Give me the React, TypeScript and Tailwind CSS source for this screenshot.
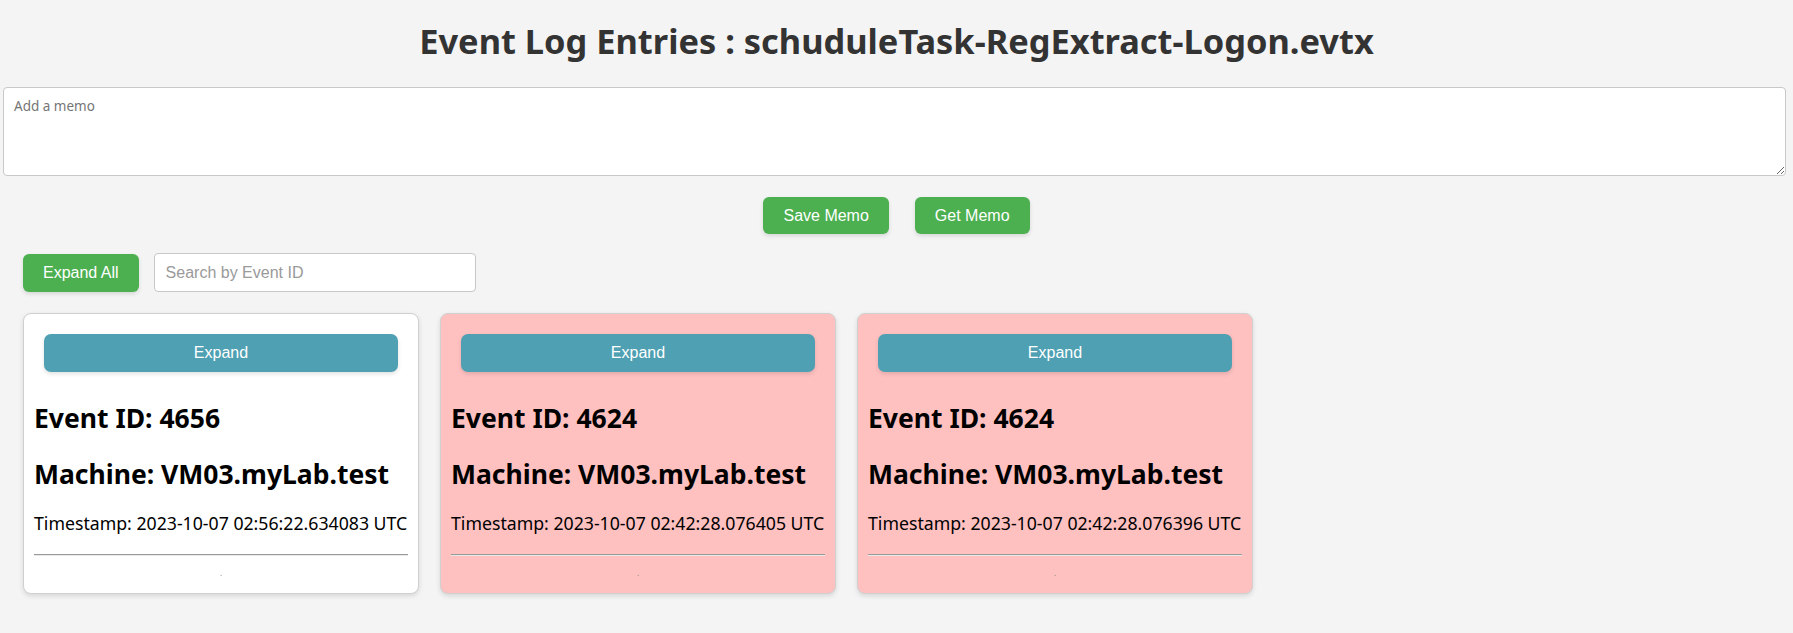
import React from "react";

type Entry = { id: string; machine: string; ts: string; alert: boolean };

const entries: Entry[] = [
  { id: "4656", machine: "VM03.myLab.test", ts: "2023-10-07 02:56:22.634083 UTC", alert: false },
  { id: "4624", machine: "VM03.myLab.test", ts: "2023-10-07 02:42:28.076405 UTC", alert: true },
  { id: "4624", machine: "VM03.myLab.test", ts: "2023-10-07 02:42:28.076396 UTC", alert: true },
];

function Card({ e }: { e: Entry }) {
  return (
    <div
      className={`w-[396px] rounded-[8px] border border-[#d0d0d0] px-[10px] pt-[20px] pb-[11px] shadow-[0_2px_5px_rgba(0,0,0,0.12)] ${
        e.alert ? "bg-[#ffc0c0]" : "bg-white"
      }`}
    >
      <button className="mx-[10px] block h-[38px] w-[354px] rounded-[7px] bg-[#4ea0b2] font-['Liberation_Sans',Arial,sans-serif] text-[16px] text-white shadow-[0_2px_4px_rgba(0,0,0,0.12)]">
        Expand
      </button>
      <div className="mt-[30px] text-[26.5px] font-bold leading-[32px] text-black">Event ID: {e.id}</div>
      <div className="mt-[24px] text-[26.5px] font-bold leading-[32px] text-black">Machine: {e.machine}</div>
      <div className="mt-[21px] whitespace-nowrap text-[17.7px] leading-[24px] text-black">Timestamp: {e.ts}</div>
      <div className="mt-[19px] h-[2px] border-t border-b border-t-[#9a9a9a] border-b-[#e8e8e8]" />
      <div className="mt-[8px] text-center text-[8px] leading-[18px] text-[#888]">.</div>
    </div>
  );
}

export default function App() {
  return (
    <div className="min-h-[633px] w-full bg-[#f4f4f4] pb-[20px] font-['Noto_Sans','Noto_Sans_CJK_JP',sans-serif]">
      <h1 className="pt-[21px] text-center text-[34.4px] font-bold leading-[40px] text-[#333]">
        Event Log Entries : schuduleTask-RegExtract-Logon.evtx
      </h1>
      <div className="ml-[3px] mr-[7px] mt-[26px]">
        <textarea
          placeholder="Add a memo"
          className="block h-[89px] w-full resize-y rounded-[4px] border border-[#c8c8c8] bg-white px-[10px] py-[8px] text-[13.5px] text-[#333] outline-none placeholder:text-[#757575]"
        />
      </div>
      <div className="mt-[21px] flex justify-center gap-[26px] font-['Liberation_Sans',Arial,sans-serif]">
        <button className="h-[37px] rounded-[6px] bg-[#4caf50] px-[20px] text-[16px] text-white shadow-[0_2px_4px_rgba(0,0,0,0.12)]">
          Save Memo
        </button>
        <button className="h-[37px] rounded-[6px] bg-[#4caf50] px-[20px] text-[16px] text-white shadow-[0_2px_4px_rgba(0,0,0,0.12)]">
          Get Memo
        </button>
      </div>
      <div className="mt-[19px] flex items-center gap-[15px] pl-[23px] font-['Liberation_Sans',Arial,sans-serif]">
        <button className="h-[38px] rounded-[6px] bg-[#4caf50] px-[20px] text-[16px] text-white shadow-[0_2px_4px_rgba(0,0,0,0.12)]">
          Expand All
        </button>
        <input
          placeholder="Search by Event ID"
          className="h-[39px] w-[322px] rounded-[4px] border border-[#c8c8c8] bg-white px-[11px] text-[16px] text-[#333] outline-none placeholder:text-[#9a9a9a]"
        />
      </div>
      <div className="mt-[21px] flex items-start gap-[21px] pl-[23px]">
        {entries.map((e, i) => (
          <Card key={i} e={e} />
        ))}
      </div>
    </div>
  );
}
